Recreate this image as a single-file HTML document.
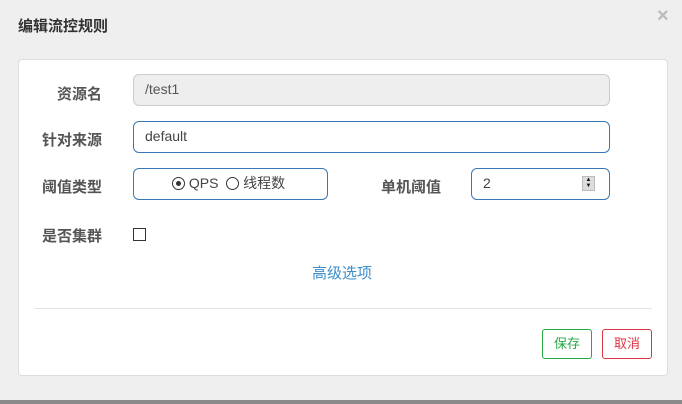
<!DOCTYPE html>
<html><head><meta charset="utf-8"><style>
body{margin:0;width:682px;height:404px;background:#efefef;position:relative;overflow:hidden;font-family:"Liberation Sans","Noto Sans CJK SC",sans-serif;}
.a{position:absolute}
.lbl{position:absolute;font-size:15px;font-weight:bold;color:#555;text-align:right;width:110px}
.in{position:absolute;box-sizing:border-box;border:1px solid #3a78b5;border-radius:6px;background:#fff;font-size:14px;color:#444;padding-left:11px;line-height:29px}
.btn{position:absolute;box-sizing:border-box;width:50px;height:30px;border-radius:3px;background:#fff;font-size:13px;text-align:center;line-height:28px}
</style></head><body>
<div class="a" style="left:0;top:400px;width:682px;height:4px;background:#8a8a8a"></div>
<div class="a" style="left:18px;top:15px;font-size:15px;font-weight:bold;color:#333">编辑流控规则</div>
<div class="a" style="left:657px;top:5px;font-size:20px;font-weight:bold;color:#bbb">×</div>
<div class="a" style="left:18px;top:59px;width:648px;height:315px;background:#fff;border:1px solid #ddd;border-radius:4px"></div>
<div class="lbl" style="left:-8px;top:83px">资源名</div>
<div class="in" style="left:133px;top:74px;width:477px;height:32px;background:#eee;border-color:#ccc;color:#555">/test1</div>
<div class="lbl" style="left:-8px;top:129px">针对来源</div>
<div class="in" style="left:133px;top:121px;width:477px;height:32px">default</div>
<div class="lbl" style="left:-8px;top:176px">阈值类型</div>
<div class="in" style="left:133px;top:168px;width:195px;height:32px;padding-left:38px">
<span style="display:inline-block;width:11px;height:11px;border:1px solid #333;border-radius:50%;vertical-align:-2px;position:relative"><span style="position:absolute;left:3px;top:3px;width:5px;height:5px;border-radius:50%;background:#333"></span></span> QPS&nbsp;&nbsp;<span style="display:inline-block;width:11px;height:11px;border:1px solid #333;border-radius:50%;vertical-align:-2px"></span> 线程数</div>
<div class="lbl" style="left:331px;top:176px">单机阈值</div>
<div class="in" style="left:471px;top:168px;width:139px;height:32px">2</div>
<div class="a" style="left:582px;top:176px;width:13px;height:15px;background:#ddd;border:1px solid #bbb;box-sizing:border-box;font-size:6px;line-height:6px;text-align:center;color:#111">▲<br>▼</div>
<div class="lbl" style="left:-8px;top:225px">是否集群</div>
<div class="a" style="left:133px;top:228px;width:11px;height:11px;border:1px solid #333"></div>
<div class="a" style="left:312px;top:262px;font-size:15px;color:#3c8dcc">高级选项</div>
<div class="a" style="left:34px;top:308px;width:618px;height:1px;background:#e3e3e3"></div>
<div class="btn" style="left:542px;top:329px;border:1px solid #28a745;color:#28a745">保存</div>
<div class="btn" style="left:602px;top:329px;border:1px solid #dc3545;color:#dc3545">取消</div>
</body></html>
